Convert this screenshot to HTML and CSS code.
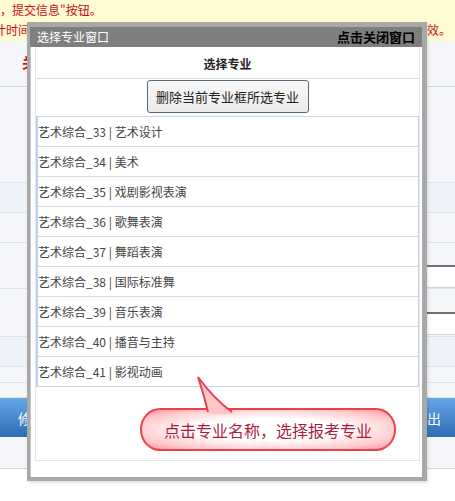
FILE: index.html
```html
<!DOCTYPE html>
<html lang="zh-CN">
<head>
  <meta charset="UTF-8" />
  <title>选择专业窗口</title>
  <link rel="stylesheet" href="styles.css">
</head>
<body>

<div class="page">
  <div class="notice">
    <p class="notice-line">，提交信息"按钮。</p>
    <p class="notice-line split"><span class="cut">计时间</span><span>效。</span></p>
  </div>
  <div class="row row-head"><span class="red-mark">关</span></div>
  <div class="row row-tall"></div>
  <div class="row alt h30"></div>
  <div class="row h30"></div>
  <div class="row field-row r1"><div class="field"></div></div>
  <div class="row field-row r2"><div class="field"></div></div>
  <div class="row alt h30"></div>
  <div class="row h16"></div>
  <div class="row h15"></div>
  <div class="action-bar"><span>修改信息</span><span>退出</span></div>
  <div class="foot"></div>
</div>

<div class="dialog">
  <div class="dialog-title">
    <span>选择专业窗口</span>
    <b>点击关闭窗口</b>
  </div>
  <div class="dialog-body">
    <div class="panel">
      <div class="panel-head">选择专业</div>
      <div class="panel-tools">
        <button class="btn">删除当前专业框所选专业</button>
      </div>
      <ul class="major-list">
        <li>艺术综合_33 | 艺术设计</li>
        <li>艺术综合_34 | 美术</li>
        <li>艺术综合_35 | 戏剧影视表演</li>
        <li>艺术综合_36 | 歌舞表演</li>
        <li>艺术综合_37 | 舞蹈表演</li>
        <li>艺术综合_38 | 国际标准舞</li>
        <li>艺术综合_39 | 音乐表演</li>
        <li>艺术综合_40 | 播音与主持</li>
        <li>艺术综合_41 | 影视动画</li>
      </ul>
      <div class="tip-area">
        <div class="tip">
          <svg class="tip-tail" width="40" height="40" viewBox="0 0 40 40">
            <path d="M12,39 Q8,20 2,2 Q18,24 37,39 Z" fill="#ffc6ca" />
            <path d="M12,37 Q8,20 2,2 Q18,24 36,37" fill="none" stroke="#e9404c" stroke-width="2" />
          </svg>
          点击专业名称，选择报考专业
        </div>
      </div>
    </div>
  </div>
</div>

</body>
</html>
```

FILE: styles.css
```css
body {
  margin: 0;
  width: 455px;
  height: 501px;
  overflow: hidden;
  background-color: #fff;
  font-family: "Noto Sans CJK SC", "Liberation Sans", sans-serif;
  position: relative;
}

/* page behind the dialog */
.notice {
  height: 41px;
  background-color: #fffbd2;
  color: #c8101a;
  font-size: 12px;
}
.notice-line {
  margin: 0;
  height: 20px;
  line-height: 20px;
}
.split {
  display: flex;
  justify-content: space-between;
  padding-right: 4px;
}
.cut {
  margin-left: -6px;
}
.row {
  box-sizing: border-box;
  background-color: #f4f6f9;
  border-bottom: 1px solid #dde3ea;
}
.row.alt {
  background-color: #eef3f9;
}
.row-head {
  height: 46px;
  padding: 8px 0 0 22px;
  border-bottom-color: #d3d8de;
}
.red-mark {
  color: #c8101a;
  font-size: 14px;
  font-weight: bold;
}
.row-tall { height: 96px; }
.h30 { height: 30px; }
.h16 { height: 16px; }
.h15 { height: 15px; }
.field-row {
  display: flex;
  justify-content: flex-end;
}
.r1 { height: 46px; padding-top: 22px; }
.r2 { height: 48px; padding-top: 23px; }
.field {
  width: 120px;
  height: 23px;
  box-sizing: border-box;
  background-color: #fff;
  border-top: 2px solid #707070;
  border-bottom: 1px solid #d0d4d8;
}
.action-bar {
  height: 39px;
  display: flex;
  justify-content: space-between;
  align-items: center;
  padding: 0 14px 0 18px;
  background: linear-gradient(#65a8e8, #2d6cb4);
  color: #fff;
  font-size: 14px;
}
.foot {
  height: 31px;
  background-color: #f4f6f9;
  border-bottom: 1px solid #d0d4d8;
}

/* dialog */
.dialog {
  position: absolute;
  left: 27px;
  top: 22px;
  width: 400px;
  height: 459px;
  box-sizing: border-box;
  padding: 5px 5px 4px 3px;
  background-color: #a8a8a8;
  box-shadow: 1px 2px 3px rgba(0,0,0,0.12);
}
.dialog-title {
  height: 20px;
  line-height: 20px;
  padding: 0 7px;
  display: flex;
  justify-content: space-between;
  background-color: #7f7f7f;
  color: #fff;
  font-size: 12px;
}
.dialog-title b {
  color: #000;
  font-size: 13px;
}
.dialog-body {
  height: 430px;
  box-sizing: border-box;
  padding: 0 2px 0 4px;
  background-color: #fff;
  border-left: 1px solid #c4c4c4;
}
.panel {
  height: 414px;
  box-sizing: border-box;
  border: 1px solid #e2e6ea;
  border-top: none;
}
.panel-head {
  height: 31px;
  line-height: 33px;
  text-align: center;
  font-size: 12px;
  font-weight: bold;
  color: #222;
  border-bottom: 1px solid #d5dfe8;
}
.panel-tools {
  height: 37px;
  text-align: center;
}
.btn {
  margin-top: 1px;
  width: 162px;
  height: 33px;
  padding: 0;
  border: 1px solid #56677a;
  border-radius: 3px;
  background: linear-gradient(#f8f8f8, #ebebeb);
  font-family: inherit;
  font-size: 13px;
  color: #222;
}
.major-list {
  list-style: none;
  margin: 0;
  padding: 0;
  border-top: 1px solid #c6d6e2;
  border-left: 2px solid #bcd4ea;
  border-right: 1px solid #c9d6e0;
}
.major-list li {
  height: 30px;
  line-height: 29px;
  box-sizing: border-box;
  padding-left: 0;
  border-bottom: 1px solid #d2dde6;
  font-size: 12px;
  color: #444;
}
.major-list li:last-child {
  border-bottom-color: #c6d6e2;
}
.tip-area {
  padding: 21px 0 0 104px;
}
.tip {
  position: relative;
  width: 256px;
  height: 43px;
  box-sizing: border-box;
  border: 2px solid #e9404c;
  border-radius: 20px / 21px;
  background: radial-gradient(ellipse at center, #fff 0%, #fff 40%, #ffc8cb 78%, #ff8f98 100%);
  display: flex;
  align-items: center;
  justify-content: center;
  color: #b01a3c;
  font-size: 16px;
}
.tip-tail {
  position: absolute;
  left: 54px;
  top: -35px;
}
```
